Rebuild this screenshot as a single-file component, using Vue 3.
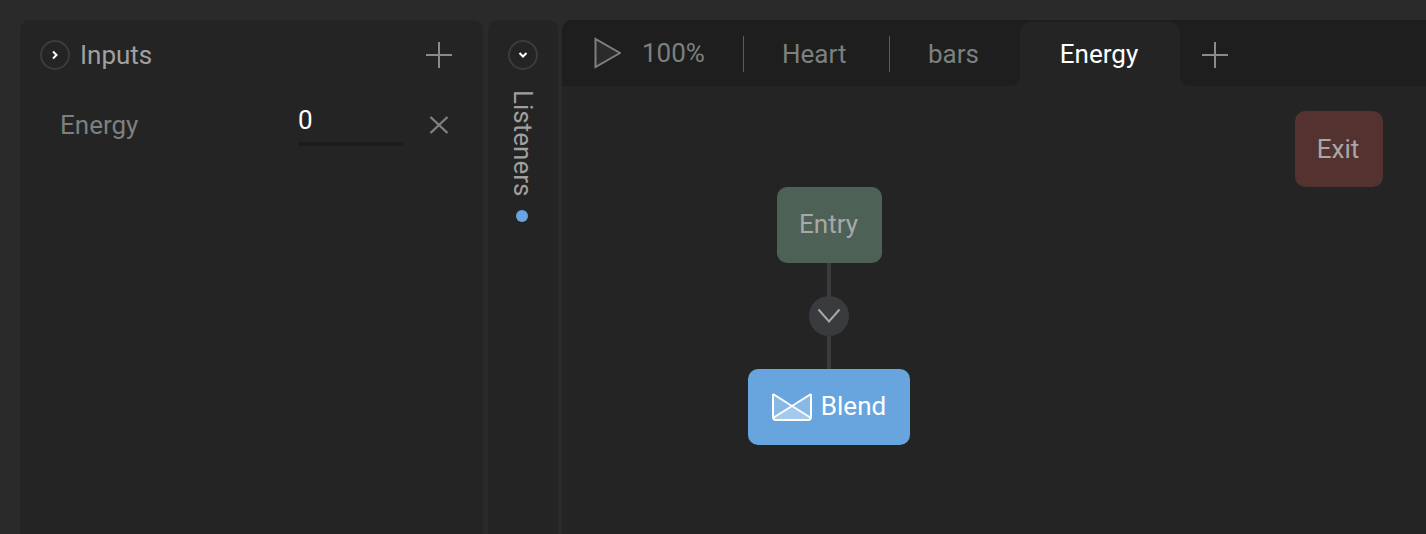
<script setup>
const tabs = ['Heart', 'bars']
</script>

<template>
  <div class="page">
    <section class="inputs">
      <header class="inputs-head">
        <button class="round">
          <svg width="8" height="10" viewBox="0 0 8 10"><path d="M2 1.500 L5.500 5 L2 8.500" /></svg>
        </button>
        <span class="title">Inputs</span>
        <svg class="plus" width="28" height="28" viewBox="0 0 28 28"><path d="M14 1V27M1 14H27" /></svg>
      </header>
      <div class="input-row">
        <span class="label">Energy</span>
        <div class="value">0</div>
        <svg class="close" width="20" height="20" viewBox="0 0 20 20"><path d="M1.500 2L18.500 18M18.500 2L1.500 18" /></svg>
      </div>
    </section>

    <aside class="listeners">
      <button class="round">
        <svg width="10" height="8" viewBox="0 0 10 8"><path d="M1.500 2 L5 5.500 L8.500 2" /></svg>
      </button>
      <span class="vertical">Listeners</span>
      <span class="dot"></span>
    </aside>

    <main class="main">
      <nav class="tabbar">
        <div class="tabs-left">
          <div class="tools">
            <svg class="play" width="28" height="32" viewBox="0 0 28 32">
              <path d="M2.500 2V30L27 16Z" />
            </svg>
            <span class="zoom">100%</span>
          </div>
          <div v-for="t in tabs" :key="t" class="tab">{{ t }}</div>
        </div>
        <div class="active-wrap"><div class="tab-active">Energy</div></div>
        <div class="tab-rest">
          <svg class="plus" width="26" height="26" viewBox="0 0 26 26"><path d="M13 0V26M0 13H26" /></svg>
        </div>
      </nav>
      <div class="canvas">
        <div class="node exit">Exit</div>
        <div class="link"></div>
        <div class="node entry">Entry</div>
        <div class="toggle">
          <svg width="24" height="16" viewBox="0 0 24 16"><path d="M1.500 1.500L12 13.500L22.500 1.500" /></svg>
        </div>
        <div class="node blend">
          <svg width="40" height="28" viewBox="0 0 40 28">
            <path class="side" d="M1 1L20 14L1 26Z" />
            <path class="side" d="M39 1L20 14L39 26Z" />
            <path class="bottom" d="M20 14L39 26Q39 27 36 27H4Q1 27 1 26Z" />
            <path class="env" d="M1 1V24Q1 27 4 27H36Q39 27 39 24V1" />
            <path class="env" d="M1 1L39 25M39 1L1 25" />
          </svg>
          <span class="blend-label">Blend</span>
        </div>
      </div>
    </main>
  </div>
</template>

<style>
html, body { margin: 0; background: #2a2a2a; }
</style>

<style scoped>
.page {
  display: flex;
  height: 514px;
  padding: 20px 0 0 20px;
  background: #2a2a2a;
  font-family: Roboto, "Liberation Sans", sans-serif;
  overflow: hidden;
}
.inputs {
  width: 463px;
  flex: none;
  margin-right: 5px;
  background: #242424;
  border-radius: 10px 10px 0 0;
}
.inputs-head {
  display: flex;
  align-items: center;
  height: 30px;
  margin-top: 20px;
  padding: 0 30px 0 20px;
}
.round {
  flex: none;
  width: 30px;
  height: 30px;
  padding: 0;
  display: flex;
  align-items: center;
  justify-content: center;
  background: transparent;
  border: 2px solid #3c3c3c;
  border-radius: 50%;
  box-sizing: border-box;
}
.round path {
  fill: none;
  stroke: #fff;
  stroke-width: 2;
}
.title {
  flex: 1;
  margin-left: 10px;
  font-size: 26px;
  color: #a0a0a0;
}
.plus path {
  fill: none;
  stroke: #8a8a8a;
  stroke-width: 2;
}
.input-row {
  display: flex;
  align-items: center;
  height: 60px;
  margin-top: 25px;
  padding: 0 34px 0 40px;
}
.label {
  flex: 1;
  font-size: 26px;
  color: #7c807e;
}
.value {
  width: 106px;
  height: 44px;
  box-sizing: border-box;
  margin: -2px 25px 0 0;
  font-size: 26px;
  line-height: 36px;
  color: #fff;
  border-bottom: 4px solid #1c1c1c;
}
.close path {
  fill: none;
  stroke: #808080;
  stroke-width: 2.400;
}
.listeners {
  width: 70px;
  flex: none;
  margin-right: 4px;
  display: flex;
  flex-direction: column;
  align-items: center;
  padding-top: 20px;
  box-sizing: border-box;
  background: #242424;
  border-radius: 10px 10px 0 0;
}
.vertical {
  margin: 20px 1px 0 0;
  writing-mode: vertical-rl;
  font-size: 26px;
  line-height: 30px;
  color: #a0a0a0;
}
.dot {
  width: 12px;
  height: 12px;
  margin: 14px 3px 0 0;
  border-radius: 50%;
  background: #68a4de;
}
.main {
  flex: 1;
  display: flex;
  flex-direction: column;
  min-width: 0;
  background: #242424;
  border-radius: 10px 0 0 0;
}
.tabbar {
  display: flex;
  height: 66px;
  flex: none;
}
.tabs-left {
  display: flex;
  flex: none;
  background: #1e1e1e;
  border-radius: 10px 0 10px 0;
}
.tools {
  display: flex;
  align-items: center;
  width: 181px;
  padding-left: 31px;
  box-sizing: border-box;
}
.play path {
  fill: #2b2b2b;
  stroke: #7c807e;
  stroke-width: 2;
}
.zoom {
  margin-left: 21px;
  font-size: 26px;
  color: #7c807e;
}
.tab {
  position: relative;
  display: flex;
  align-items: center;
  height: 66px;
  box-sizing: border-box;
  padding: 2px 0 0 39px;
  font-size: 26px;
  color: #7c807e;
}
.tab:nth-of-type(2) { width: 146px; }
.tab:nth-of-type(3) { width: 131px; }
.tab::before {
  content: "";
  position: absolute;
  left: 0;
  top: 16px;
  width: 1px;
  height: 36px;
  background: #55605a;
}
.active-wrap {
  flex: none;
  padding-top: 2px;
  background: #1e1e1e;
}
.tab-active {
  display: flex;
  align-items: center;
  justify-content: center;
  width: 160px;
  height: 64px;
  box-sizing: border-box;
  padding-right: 2px;
  background: #242424;
  border-radius: 10px 10px 0 0;
  font-size: 26px;
  color: #fff;
}
.tab-rest {
  flex: 1;
  display: flex;
  align-items: center;
  padding: 4px 0 0 22px;
  box-sizing: border-box;
  background: #1e1e1e;
  border-radius: 0 0 0 10px;
}
.canvas {
  position: relative;
  flex: 1;
}
.node {
  position: absolute;
  display: flex;
  align-items: center;
  justify-content: center;
  box-sizing: border-box;
  border-radius: 10px;
  font-size: 26px;
  color: #a8a8a8;
}
.exit {
  left: 733px;
  top: 25px;
  width: 88px;
  height: 76px;
  padding-right: 2px;
  background: #543230;
}
.entry {
  left: 215px;
  top: 101px;
  width: 105px;
  height: 76px;
  padding: 0 2px 2px 0;
  background: #4d6156;
}
.link {
  position: absolute;
  left: 265px;
  top: 170px;
  width: 4px;
  height: 120px;
  background: #3a3b3e;
}
.toggle {
  position: absolute;
  left: 247px;
  top: 210px;
  width: 40px;
  height: 40px;
  display: flex;
  align-items: center;
  justify-content: center;
  border-radius: 50%;
  background: #3a3b3e;
}
.toggle path {
  fill: none;
  stroke: #a8a8a8;
  stroke-width: 2;
}
.blend {
  left: 186px;
  top: 283px;
  width: 162px;
  height: 76px;
  gap: 9px;
  background: #68a4de;
  color: #fff;
}
.blend-label { margin-bottom: 2px; }
.side { fill: #88b8e6; }
.bottom { fill: #a4c9ec; }
.env {
  fill: none;
  stroke: #fff;
  stroke-width: 2;
}
</style>
